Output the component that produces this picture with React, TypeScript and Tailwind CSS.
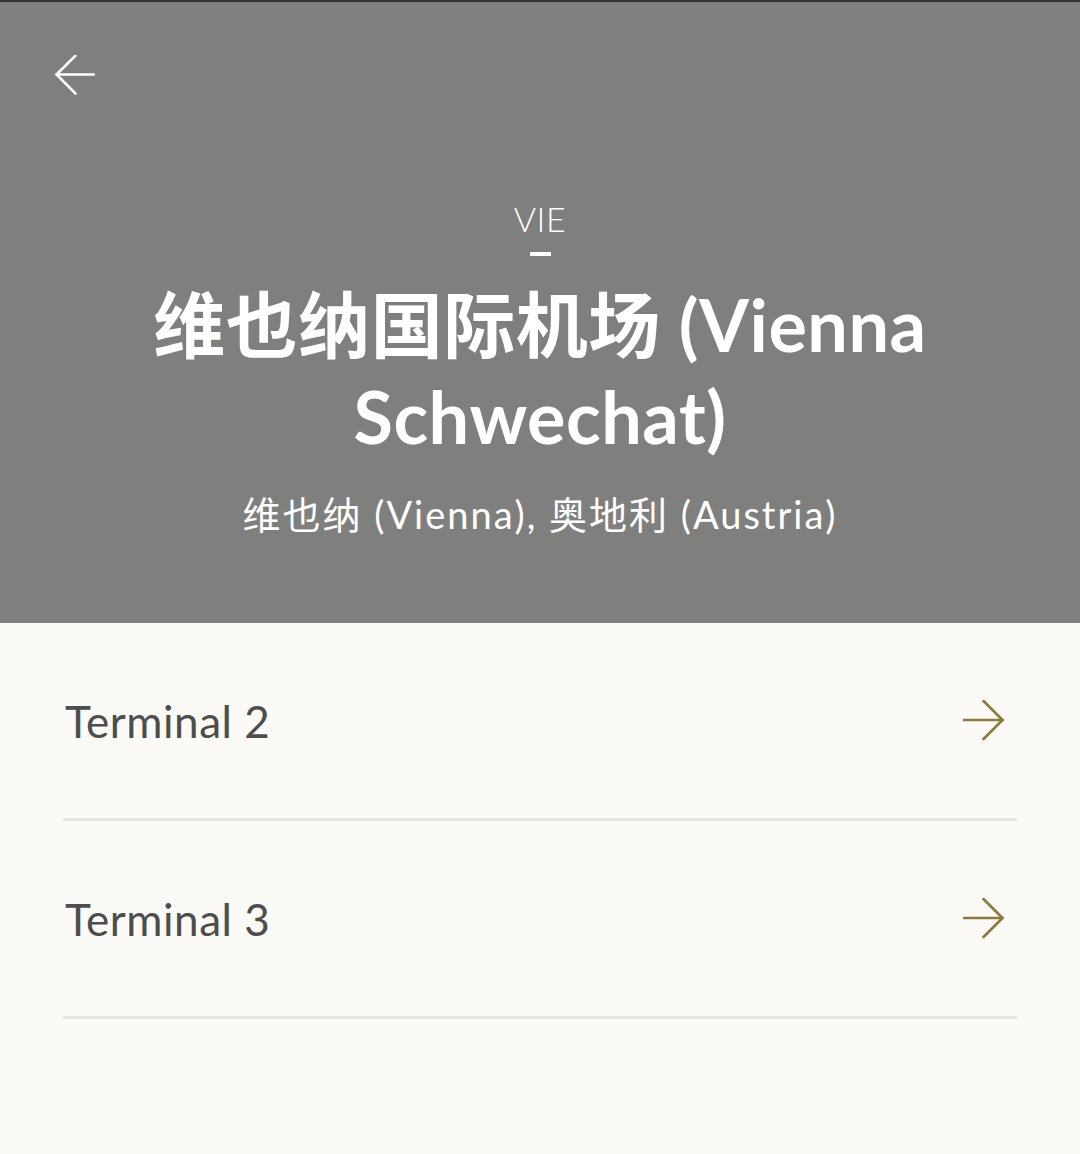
import React from "react";

const FONT = { fontFamily: 'Lato, "Noto Sans CJK SC", sans-serif' };

function BackArrow() {
  return (
    <svg width="40" height="40" viewBox="0 0 40 40" fill="none" stroke="white" strokeWidth="2.5" strokeLinecap="round" strokeLinejoin="round">
      <path d="M39 19.5H1.5" />
      <path d="M20.5 0.5L1.5 19.5L20.5 38.5" />
    </svg>
  );
}

function FwdArrow() {
  return (
    <svg width="41" height="41" viewBox="0 0 41 41" fill="none" stroke="#8a7a3c" strokeWidth="2.6" strokeLinecap="round" strokeLinejoin="round">
      <path d="M1 20h38.5" />
      <path d="M20.5 1L39.5 20L20.5 39" />
    </svg>
  );
}

function Row({ label }: { label: string }) {
  return (
    <div className="mx-[63px] border-b-[3px] border-[#e6e4df]">
      <div className="flex h-[195px] items-center justify-between pl-[2px] pr-[13px]">
        <span className="text-[44px] leading-none text-[#4d4d4d] tracking-[0.5px]">{label}</span>
        <FwdArrow />
      </div>
    </div>
  );
}

export default function App() {
  return (
    <div className="w-[1080px] h-[1154px] bg-[#fbfaf6] overflow-hidden" style={FONT}>
      <div className="h-[2px] bg-[#333333]" />
      <div className="h-[621px] bg-[#7f7f7e] flex flex-col">
        <div className="pl-[55px] pt-[53px]">
          <BackArrow />
        </div>
        <div className="flex flex-col items-center mt-[104px]">
          <div className="text-[34px] leading-[40px] text-white font-light tracking-[0.5px]">VIE</div>
          <div className="w-[21px] h-[4px] bg-white mt-[13px]" />
          <h1 className="mt-[22px] text-center text-white font-bold text-[72px] leading-[92px] tracking-[0.5px]">
            维也纳国际机场 (Vienna
            <br />
            Schwechat)
          </h1>
          <div className="mt-[28px] text-[38px] leading-[48px] text-white font-normal tracking-[2px]">
            维也纳 (Vienna), 奥地利 (Austria)
          </div>
        </div>
      </div>
      <Row label="Terminal 2" />
      <Row label="Terminal 3" />
    </div>
  );
}
